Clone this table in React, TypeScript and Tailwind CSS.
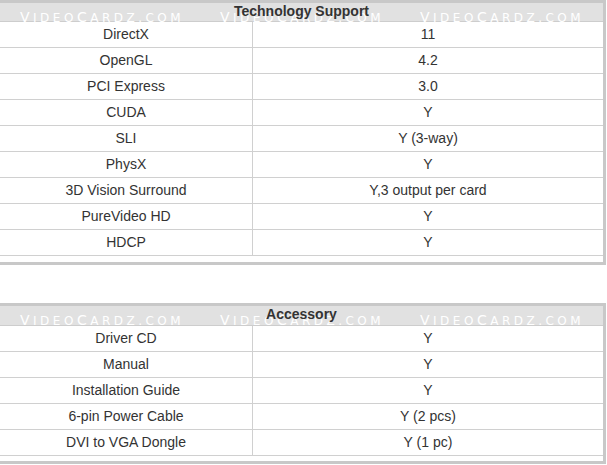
import React from "react";

type Row = [string, string];

const tech: Row[] = [
  ["DirectX", "11"],
  ["OpenGL", "4.2"],
  ["PCI Express", "3.0"],
  ["CUDA", "Y"],
  ["SLI", "Y (3-way)"],
  ["PhysX", "Y"],
  ["3D Vision Surround", "Y,3 output per card"],
  ["PureVideo HD", "Y"],
  ["HDCP", "Y"],
];

const acc: Row[] = [
  ["Driver CD", "Y"],
  ["Manual", "Y"],
  ["Installation Guide", "Y"],
  ["6-pin Power Cable", "Y (2 pcs)"],
  ["DVI to VGA Dongle", "Y (1 pc)"],
];

function Watermark() {
  return (
    <div className="absolute inset-0 pointer-events-none" aria-hidden="true">
      {[20, 220, 420].map((x) => (
        <span
          key={x}
          className="absolute top-[6px] leading-[15px] tracking-[3.5px] text-white font-['DejaVu_Sans',sans-serif] whitespace-nowrap"
          style={{ left: x }}
        >
          <span className="text-[14px]">V</span>
          <span className="text-[12px]">IDEO</span>
          <span className="text-[14px]">C</span>
          <span className="text-[12px]">ARDZ.COM</span>
        </span>
      ))}
    </div>
  );
}

function Table({ title, rows, headH, pb }: { title: string; rows: Row[]; headH: string; pb: string }) {
  return (
    <div className={`w-[606px] border-t-[3px] border-r-[3px] border-b-[3px] border-[#c8c8c8] ${pb}`}>
      <div className={`relative ${headH} bg-[#e1e1e1] border-b border-[#cdcdcd]`}>
        <Watermark />
        <div className="relative text-center font-bold text-[14px] leading-[17px] text-[#333333]">{title}</div>
      </div>
      {rows.map(([a, b]) => (
        <div key={a} className="flex h-[26px] border-b border-[#d0d0d0] text-[14px] text-[#333333]">
          <div className="w-[253px] border-r border-[#d0d0d0] flex items-center justify-center">{a}</div>
          <div className="flex-1 flex items-center justify-center">{b}</div>
        </div>
      ))}
    </div>
  );
}

export default function App() {
  return (
    <div className="w-[607px] h-[465px] bg-white font-['Liberation_Sans',Arial,sans-serif]">
      <Table title="Technology Support" rows={tech} headH="h-[19px]" pb="pb-[6px]" />
      <div className="h-[38px]" />
      <Table title="Accessory" rows={acc} headH="h-[20px]" pb="pb-[5px]" />
    </div>
  );
}
